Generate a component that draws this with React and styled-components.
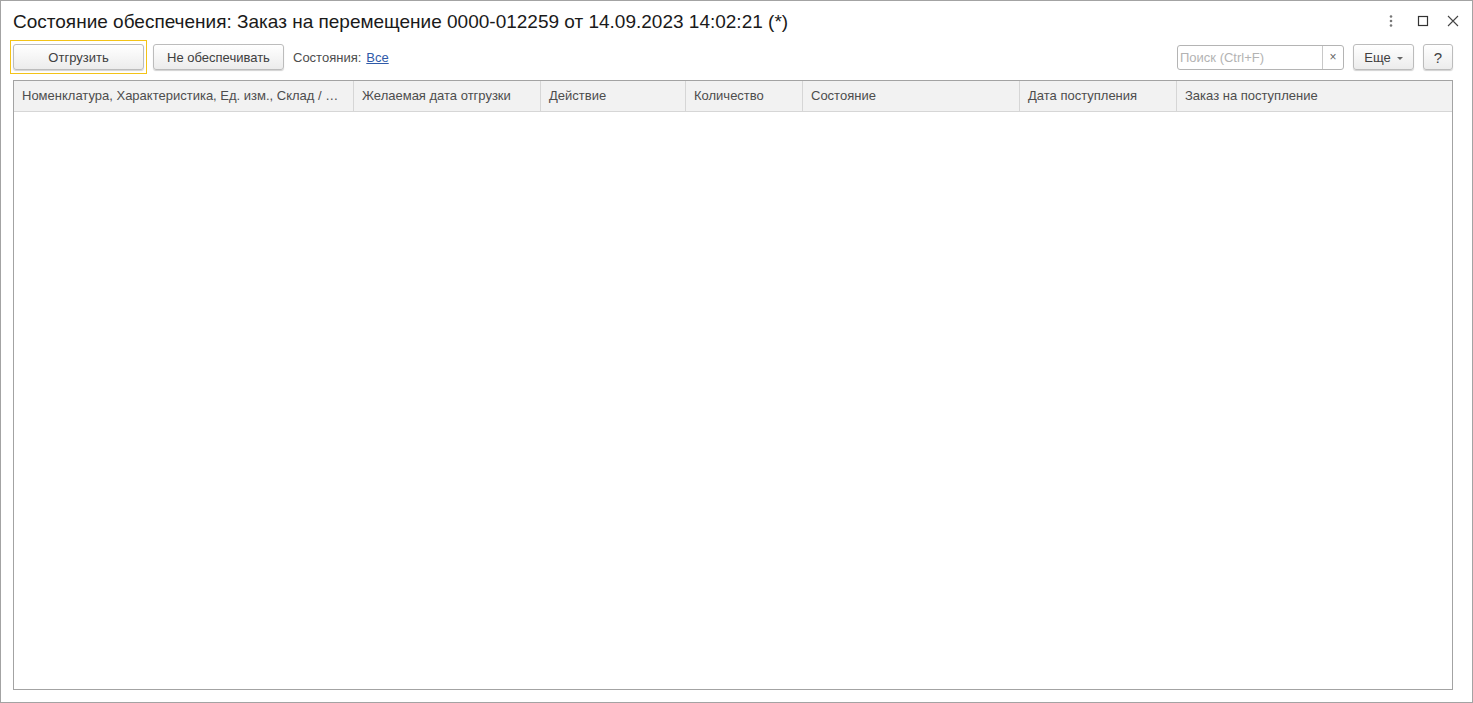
import React from 'react';
import styled, { createGlobalStyle } from 'styled-components';

const GlobalStyle = createGlobalStyle`
  html, body {
    margin: 0;
    padding: 0;
    background: #fff;
    font-family: "Liberation Sans", Arial, sans-serif;
  }
`;

// --- Styled Components ---

const Frame = styled.div`
  width: 1473px;
  height: 703px;
  box-sizing: border-box;
  border: 1px solid #a3a3a3;
  display: flex;
  flex-direction: column;
  background: #fff;
`;

const TitleBar = styled.div`
  height: 39px;
  display: flex;
  align-items: center;
  padding: 0 13px 0 12px;
  flex-shrink: 0;
`;

const Title = styled.h1`
  flex: 1;
  margin: 0;
  font-size: 19px;
  font-weight: 400;
  color: #1a1a1a;
  white-space: nowrap;
  padding-top: 2px;
`;

const WindowButtons = styled.div`
  display: flex;
  align-items: center;
  color: #555;
`;

const WinIcon = styled.span`
  display: flex;
  margin-left: ${p => p.ml || '0'};
`;

const Toolbar = styled.div`
  height: 34px;
  display: flex;
  align-items: center;
  padding: 0 19px 0 9px;
  flex-shrink: 0;
`;

const FocusRing = styled.div`
  border: 1px solid #f3c318;
  padding: 3px 2px;
  display: flex;
`;

const Button = styled.button`
  height: 26px;
  width: ${p => p.w || 'auto'};
  padding: 0 ${p => p.px || '10px'};
  margin-left: ${p => p.ml || '0'};
  box-sizing: border-box;
  background: linear-gradient(#ffffff, #ececec);
  border: 1px solid #bcbcbc;
  border-radius: 3px;
  box-shadow: 0 1px 1px rgba(0, 0, 0, 0.18);
  font-family: "Liberation Sans", Arial, sans-serif;
  font-size: ${p => p.fs || '13px'};
  color: #404040;
  display: flex;
  align-items: center;
  justify-content: center;
  gap: 6px;
  cursor: pointer;
`;

const FilterLabel = styled.span`
  margin-left: 9px;
  font-size: 13px;
  color: #4d4d4d;
`;

const FilterLink = styled.a`
  margin-left: 5px;
  font-size: 13px;
  color: #2f5aa8;
  text-decoration: underline;
`;

const Spacer = styled.div`
  flex: 1;
`;

const SearchBox = styled.div`
  width: 167px;
  height: 25px;
  box-sizing: border-box;
  border: 1px solid #b4b4b4;
  border-radius: 3px;
  display: flex;
  align-items: stretch;
  background: #fff;
`;

const SearchInput = styled.input`
  flex: 1;
  min-width: 0;
  border: none;
  outline: none;
  padding: 0 2px;
  font-family: "Liberation Sans", Arial, sans-serif;
  font-size: 13px;
  color: #333;
  background: transparent;

  &::placeholder {
    color: #b3b3b3;
  }
`;

const ClearSearch = styled.span`
  width: 20px;
  border-left: 1px solid #c8c8c8;
  display: flex;
  align-items: center;
  justify-content: center;
  font-size: 12px;
  color: #666;
`;

const Caret = styled.span`
  width: 0;
  height: 0;
  border-left: 3px solid transparent;
  border-right: 3px solid transparent;
  border-top: 3px solid #666;
  margin-top: 2px;
`;

const Table = styled.div`
  flex: 1;
  margin: 6px 19px 12px 12px;
  border: 1px solid #a3a3a3;
  display: flex;
  flex-direction: column;
`;

const HeaderRow = styled.div`
  display: grid;
  grid-template-columns: 340px 187px 145px 117px 217px 157px 1fr;
  height: 30px;
  background: #f2f2f2;
  border-bottom: 1px solid #d6d6d6;
`;

const HeaderCell = styled.div`
  display: flex;
  align-items: center;
  padding: 0 8px 1px;
  border-right: ${p => (p.last ? 'none' : '1px solid #d6d6d6')};
  font-size: 13px;
  color: #4d4d4d;
  white-space: nowrap;
  min-width: 0;
`;

const TableBody = styled.div`
  flex: 1;
  background: #fff;
`;

// --- Icons ---

const MoreIcon = () => (
  <svg width="4" height="12" viewBox="0 0 4 12">
    <circle cx="2" cy="1.5" r="1.3" fill="#777" />
    <circle cx="2" cy="6" r="1.3" fill="#777" />
    <circle cx="2" cy="10.5" r="1.3" fill="#777" />
  </svg>
);

const MaximizeIcon = () => (
  <svg width="12" height="12" viewBox="0 0 12 12">
    <rect x="1.5" y="1.5" width="9" height="9" fill="none" stroke="#333" strokeWidth="1.2" />
  </svg>
);

const CloseIcon = () => (
  <svg width="12" height="12" viewBox="0 0 12 12">
    <path d="M1 1 L11 11 M11 1 L1 11" stroke="#444" strokeWidth="1.1" />
  </svg>
);

const columns = [
  'Номенклатура, Характеристика, Ед. изм., Склад /  …',
  'Желаемая дата отгрузки',
  'Действие',
  'Количество',
  'Состояние',
  'Дата поступления',
  'Заказ на поступление',
];

// --- Component ---

function App() {
  return (
    <>
      <GlobalStyle />
      <Frame>
        <TitleBar>
          <Title>Состояние обеспечения: Заказ на перемещение 0000-012259 от 14.09.2023 14:02:21 (*)</Title>
          <WindowButtons>
            <WinIcon><MoreIcon /></WinIcon>
            <WinIcon ml="24px"><MaximizeIcon /></WinIcon>
            <WinIcon ml="18px"><CloseIcon /></WinIcon>
          </WindowButtons>
        </TitleBar>

        <Toolbar>
          <FocusRing>
            <Button w="131px">Отгрузить</Button>
          </FocusRing>
          <Button w="131px" ml="6px">Не обеспечивать</Button>
          <FilterLabel>Состояния:</FilterLabel>
          <FilterLink href="#">Все</FilterLink>
          <Spacer />
          <SearchBox>
            <SearchInput placeholder="Поиск (Ctrl+F)" />
            <ClearSearch>×</ClearSearch>
          </SearchBox>
          <Button w="61px" ml="9px" px="0">
            Еще <Caret />
          </Button>
          <Button w="30px" ml="9px" px="0" fs="15px">?</Button>
        </Toolbar>

        <Table>
          <HeaderRow>
            {columns.map((c, i) => (
              <HeaderCell key={c} last={i === columns.length - 1}>
                {c}
              </HeaderCell>
            ))}
          </HeaderRow>
          <TableBody />
        </Table>
      </Frame>
    </>
  );
}

export default App;
